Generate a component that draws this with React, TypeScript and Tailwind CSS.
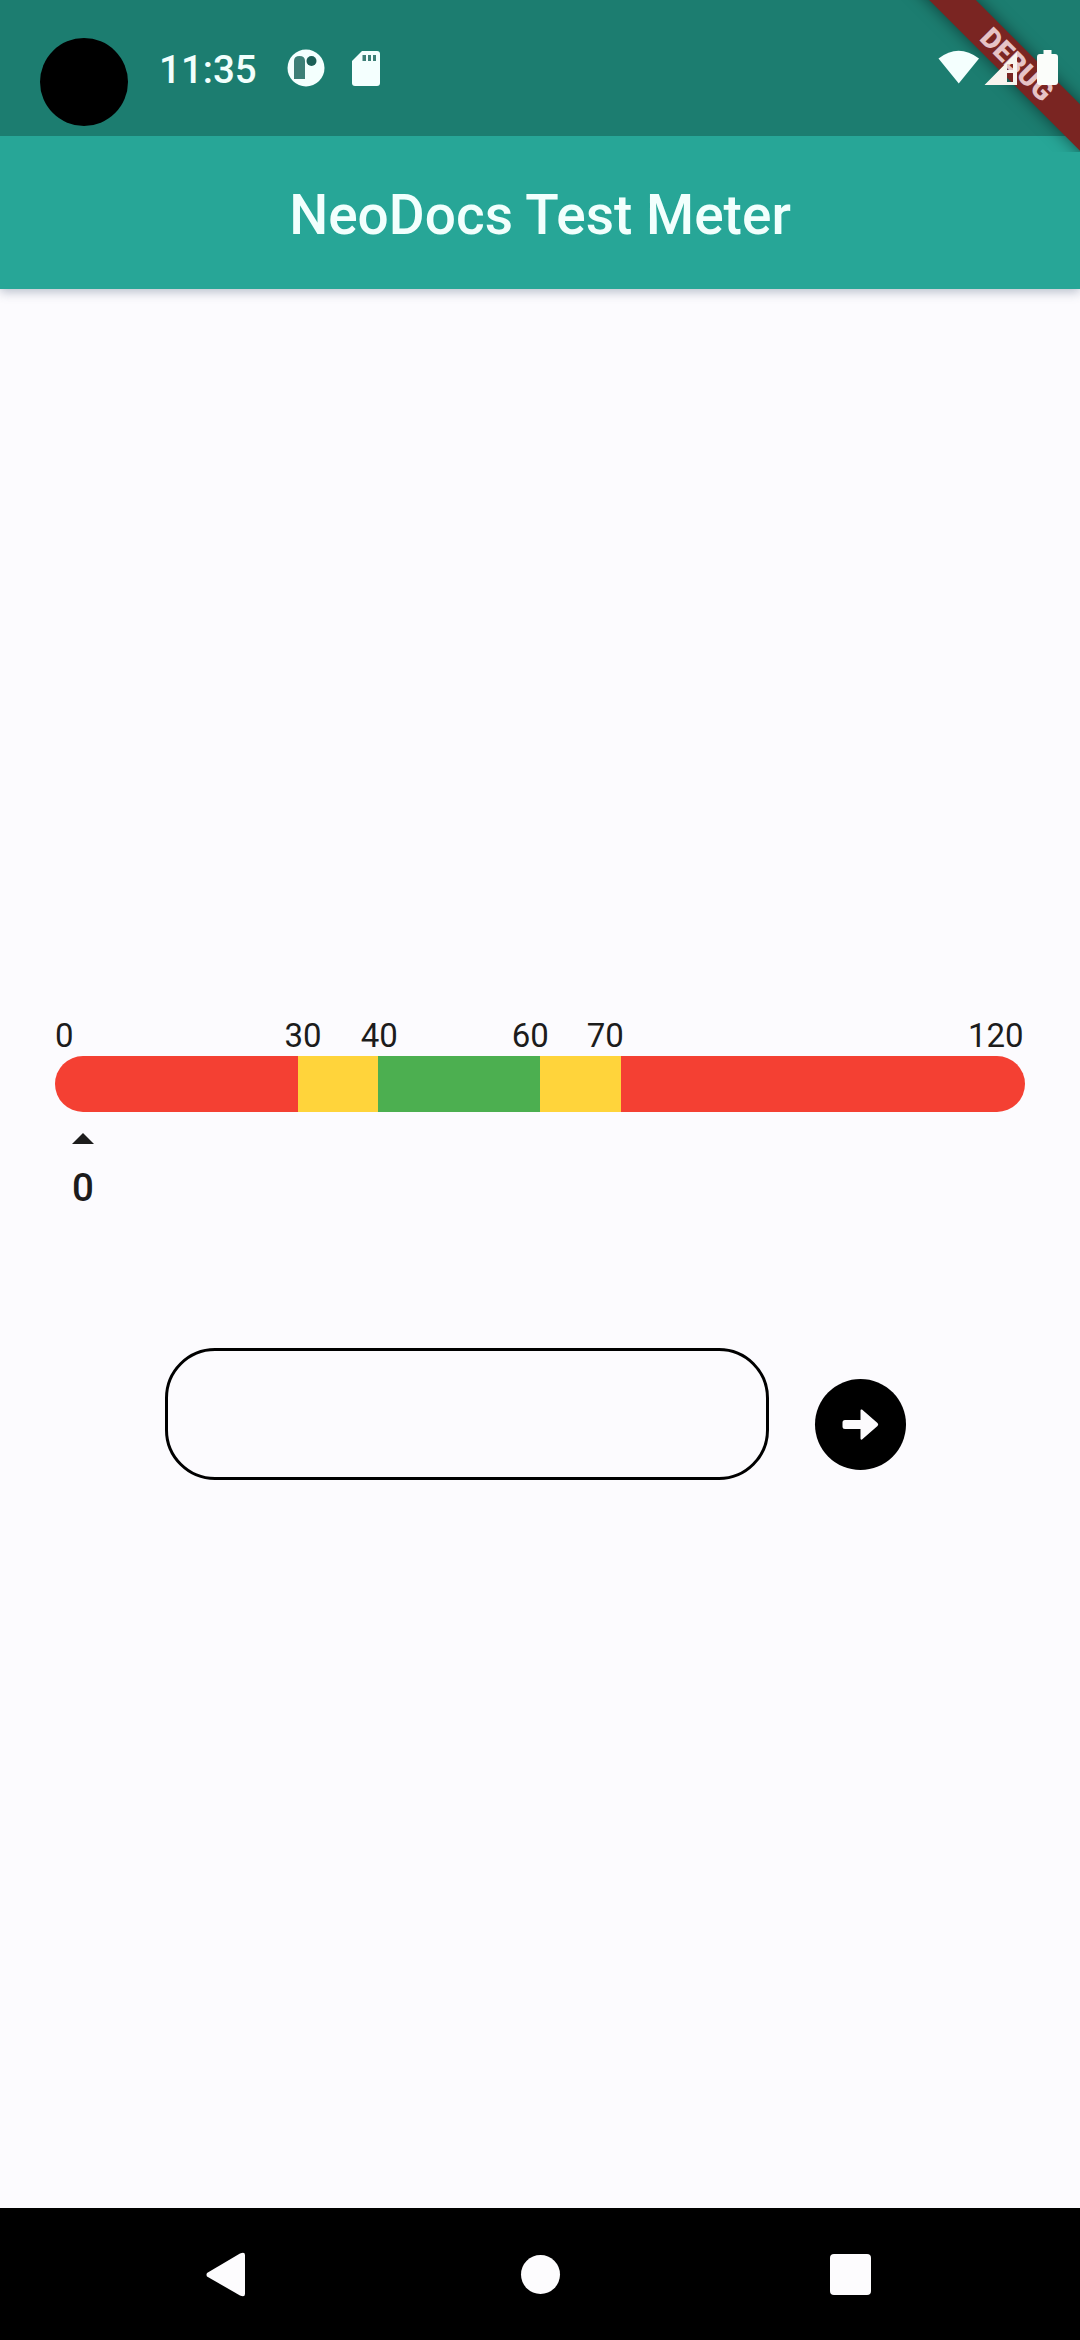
const segments = [
  { span: 30, tone: 'bg-[#f44033]' },
  { span: 10, tone: 'bg-[#ffd43b]' },
  { span: 20, tone: 'bg-[#4caf50]' },
  { span: 10, tone: 'bg-[#ffd43b]' },
  { span: 50, tone: 'bg-[#f44033]' },
];

const labels = [
  { value: 0, gap: 'ml-0' },
  { value: 30, gap: 'ml-[211px]' },
  { value: 40, gap: 'ml-[39px]' },
  { value: 60, gap: 'ml-[114px]' },
  { value: 70, gap: 'ml-[38px]' },
  { value: 120, gap: 'ml-[344px]' },
];

function StatusBar() {
  return (
    <div className="relative flex h-[136px] shrink-0 overflow-hidden bg-[#1c7d70]">
      <div className="mt-[38px] ml-[40px] size-[88px] rounded-full bg-black" />
      <span className="mt-[48px] ml-[31px] w-[100px] text-[38.500px] leading-[44px] font-medium text-[#f2fffd]">11:35</span>
      <svg className="mt-[49px] ml-[28px] h-[38px] w-[38px]" viewBox="0 0 38 38">
        <circle cx="19" cy="19" r="18.5" fill="#f4fffe" />
        <path d="M7 30V12q0-5 5.500-5T18 12v18z" fill="#3d7f77" />
        <circle cx="24.500" cy="12" r="5" fill="#1c5f57" />
      </svg>
      <svg className="mt-[51px] ml-[27px] h-[35px] w-[28px]" viewBox="0 0 28 35">
        <path d="M10 0h15q3 0 3 3v29q0 3-3 3H3q-3 0-3-3V10z" fill="#f4fffe" />
        <path d="M10.500 4h3.500v6h-3.500zM16 4h3v6h-3zM21 4h3v6h-3z" fill="#3d7f77" />
      </svg>
    </div>
  );
}

function DebugBanner() {
  return (
    <div className="pointer-events-none absolute top-0 right-0 h-[152px] w-[180px] overflow-hidden">
      <div className="absolute top-[47.500px] left-[-33px] flex h-[33px] w-[300px] rotate-45 items-center justify-center bg-[#7a2522] text-[28px] leading-none font-black text-[#e6c3c6] shadow-[0_0_16px_rgba(0,0,0,0.5)]">
        DEBUG
      </div>
    </div>
  );
}

function SystemIcons() {
  return (
    <svg className="absolute top-[49px] right-[20px] h-[38px] w-[124px]" viewBox="0 0 124 38">
      <path d="M2.500 9.500Q22.500 -6 43 9.500L22.750 34.500z" fill="#f4fffe" />
      <path fillRule="evenodd" d="M48.500 36L81 3v33zM71 15v6h6v-6zM71 24v9h6v-9z" fill="#f8f4ee" />
      <path d="M107.500 1h8v4h3.500q3 0 3 3v25q0 3-3 3h-15q-3 0-3-3V8q0-3 3-3h3.500z" fill="#fbfdfa" />
    </svg>
  );
}

function Meter() {
  return (
    <section className="mx-[55px] mt-[727px] flex flex-col">
      <div className="flex h-[40px] text-[33px] leading-[40px] text-[#1c1c1c]">
        {labels.map((label) => (
          <span key={label.value} className={label.gap}>
            {label.value}
          </span>
        ))}
      </div>
      <div className="flex h-[56px] overflow-hidden rounded-full">
        {segments.map((segment, index) => (
          <div key={index} className={segment.tone} style={{ flexGrow: segment.span }} />
        ))}
      </div>
      <div className="mt-[21px] flex w-[56px] flex-col items-center">
        <svg className="h-[11px] w-[22px]" viewBox="0 0 22 11">
          <path d="M11 0l11 11H0z" fill="#1c1c1c" />
        </svg>
        <span className="mt-[22px] text-[38.500px] leading-[44px] font-medium text-[#1c1c1c]">0</span>
      </div>
    </section>
  );
}

function EntryRow() {
  return (
    <form className="mt-[138px] ml-[165px] flex items-start" onSubmit={(event) => event.preventDefault()}>
      <input
        aria-label="Reading"
        className="h-[132px] w-[604px] rounded-[50px] border-3 border-black bg-transparent px-10 text-[44px] outline-none"
      />
      <button
        aria-label="Submit"
        className="mt-[31px] ml-[46px] flex size-[91px] items-center justify-center rounded-full bg-black"
      >
        <svg className="h-[31px] w-[37px]" viewBox="0 0 37 31">
          <path d="M3 11H18.500V1.500Q18.500 0 20 .5L35.500 14Q37 15.500 35.500 17L20 30.500Q18.500 31 18.500 29.500V20H3Q.5 20 .5 17.500V13.500Q.5 11 3 11z" fill="#fcfbfd" />
        </svg>
      </button>
    </form>
  );
}

function NavigationBar() {
  return (
    <nav className="flex h-[132px] shrink-0 items-start bg-black">
      <svg className="mt-[44px] ml-[206px] h-[45px] w-[39px]" viewBox="0 0 39 45">
        <path d="M1 21L34 1.500Q39-.5 39 3v39q0 3.500-5 1.500L1 24.500Q0 22.750 1 21z" fill="#fdfcfe" />
      </svg>
      <div className="mt-[47px] ml-[276px] size-[39px] rounded-full bg-[#fdfcfe]" />
      <div className="mt-[46px] ml-[270px] size-[41px] rounded-[4px] bg-[#fdfcfe]" />
    </nav>
  );
}

export default function App() {
  return (
    <div className="relative flex h-[2340px] w-[1080px] flex-col overflow-hidden bg-[#fcfbfe] font-['Roboto',sans-serif]">
      <StatusBar />
      <header className="flex h-[153px] shrink-0 items-center justify-center bg-[#27a697] pt-1 text-[55px] leading-[64px] font-medium text-[#f2fffd] shadow-[0_3px_10px_rgba(60,80,110,0.35)]">
        <h1>NeoDocs Test Meter</h1>
      </header>
      <main className="flex-1">
        <Meter />
        <EntryRow />
      </main>
      <NavigationBar />
      <DebugBanner />
      <SystemIcons />
    </div>
  );
}
